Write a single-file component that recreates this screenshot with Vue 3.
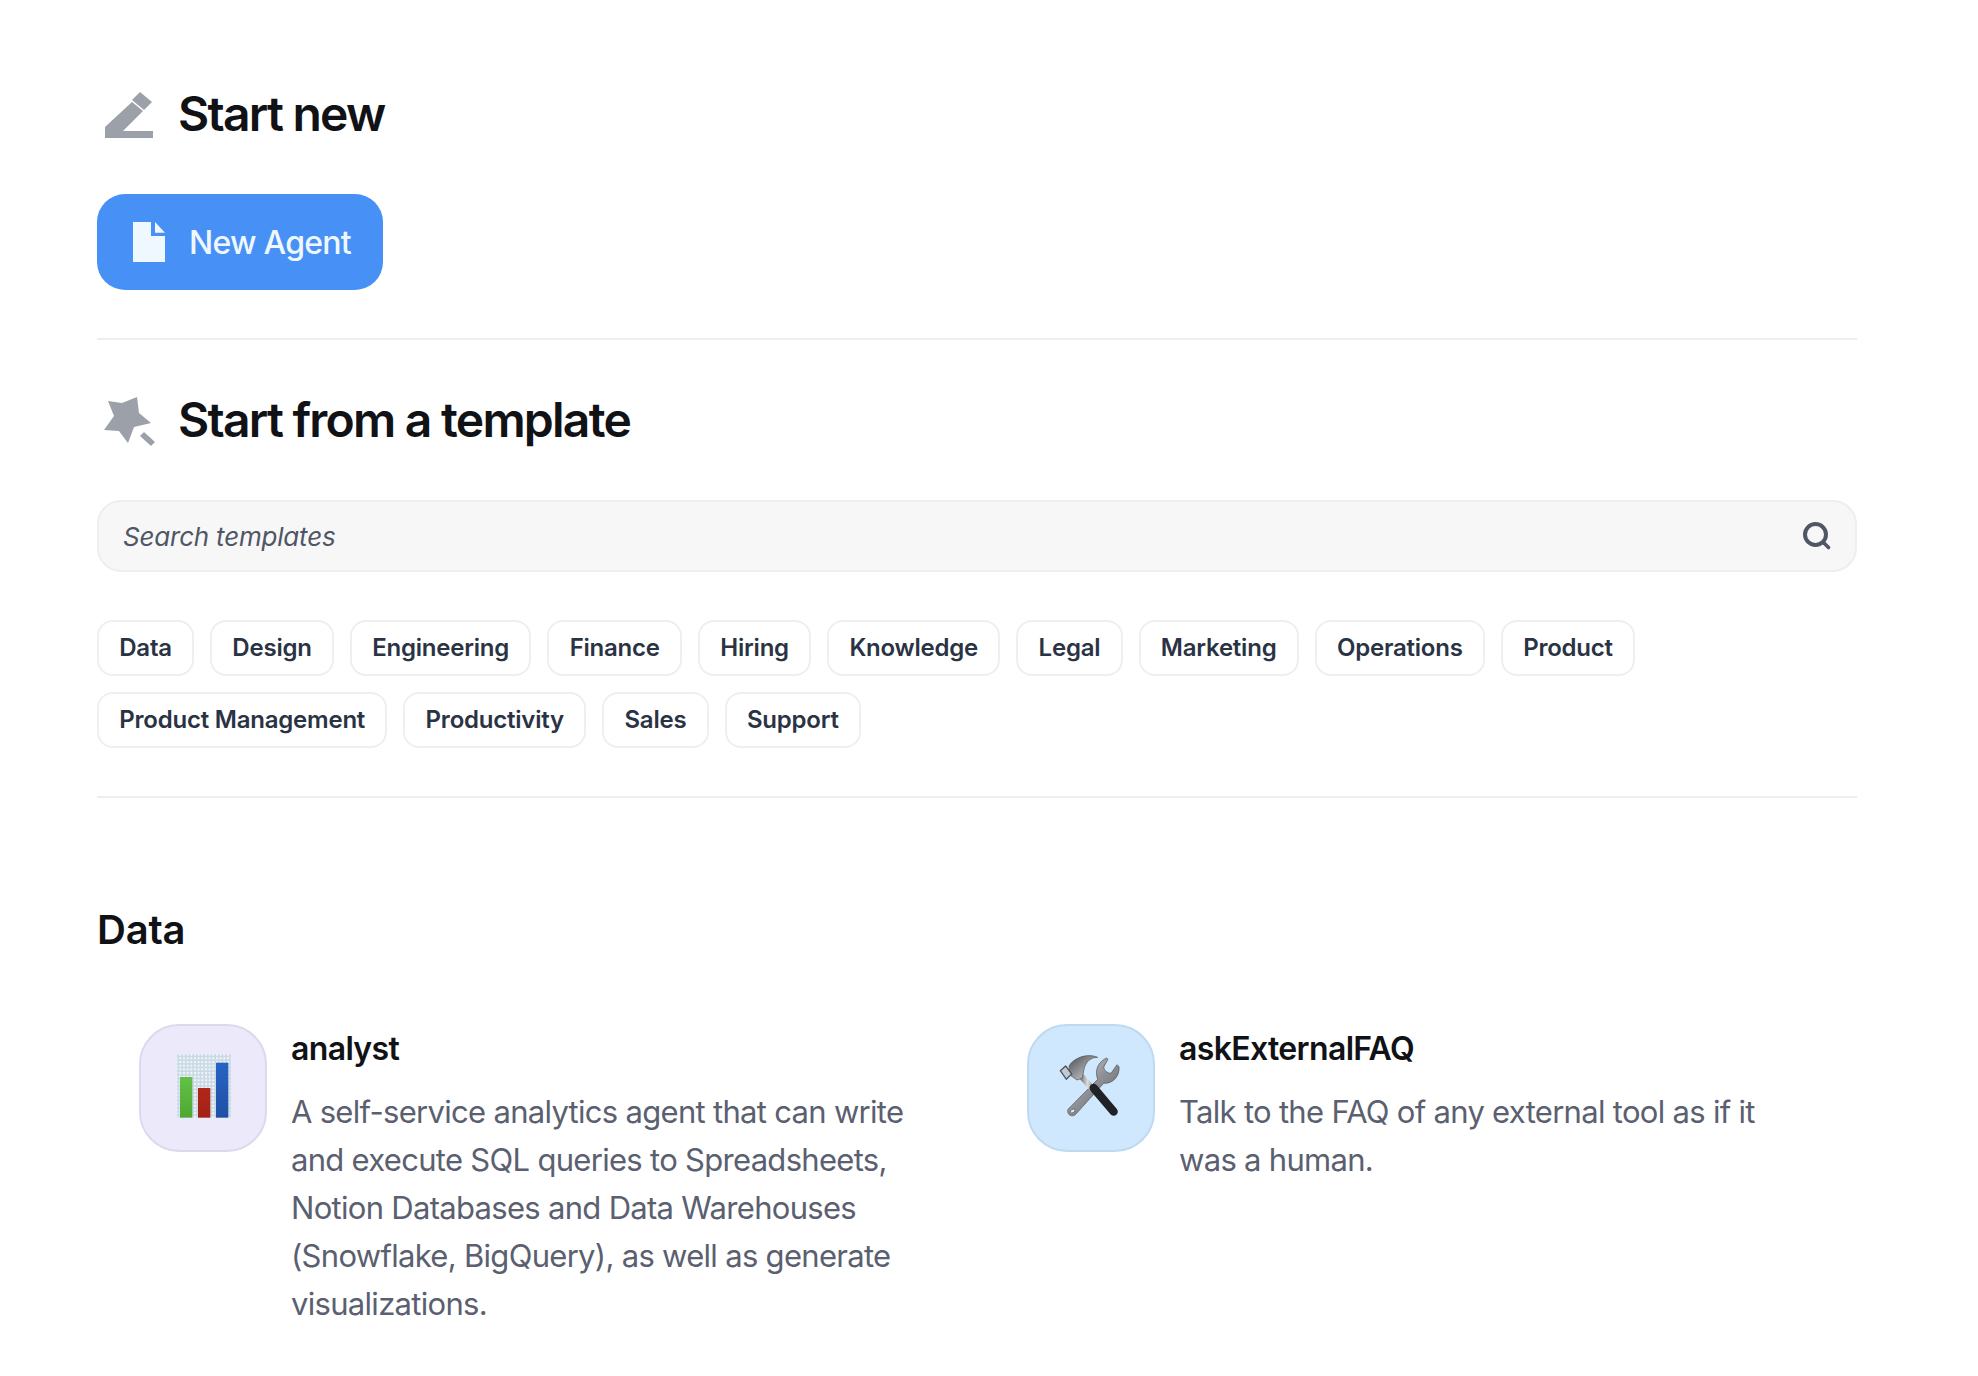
<script setup>
const chips = ['Data','Design','Engineering','Finance','Hiring','Knowledge','Legal','Marketing','Operations','Product','Product Management','Productivity','Sales','Support']
const cards = [
  { name: 'analyst', bg: 'purple', kind: 'chart', desc: 'A self-service analytics agent that can write and execute SQL queries to Spreadsheets, Notion Databases and Data Warehouses (Snowflake, BigQuery), as well as generate visualizations.' },
  { name: 'askExternalFAQ', bg: 'blue', kind: 'tools', desc: 'Talk to the FAQ of any external tool as if it was a human.' }
]
</script>

<template>
  <main class="page">
    <section class="section first">
      <div class="heading">
        <svg class="hicon" viewBox="0 0 48 48"><path fill="#9ca0a8" d="M0 48V37L27 12l11 9-20 20h30v7z"/><path fill="#9ca0a8" d="M35 2l12 10-8 8-12-10z"/></svg>
        <h2>Start new</h2>
      </div>
      <button class="cta">
        <svg class="doc" viewBox="0 0 32 40"><path fill="#eff8ff" d="M0 0h18v14h14v26H0z"/><path fill="#eff8ff" d="M22 0l10 10.7H22z"/></svg>
        <span>New Agent</span>
      </button>
    </section>

    <section class="section second">
      <div class="heading">
        <svg class="hicon" viewBox="0 0 48 48"><path fill="#9ca0a8" d="M3 5l14 2 15-6 2 16 12 10-17 4-6 16-9-12-15-1 10-14z"/><path fill="#9ca0a8" d="M35 40l4-4 11 10-4 4z"/></svg>
        <h2>Start from a template</h2>
      </div>
      <div class="search">
        <span>Search templates</span>
        <svg viewBox="0 0 28 28" class="mag"><circle cx="12.5" cy="12.5" r="10.5" fill="none" stroke="#4f5666" stroke-width="4"/><path d="M21 21l4.5 4.5" stroke="#4f5666" stroke-width="3.6" stroke-linecap="round"/></svg>
      </div>
      <div class="chips">
        <button v-for="c in chips" :key="c" class="chip">{{ c }}</button>
      </div>
    </section>

    <section class="data">
      <h3>Data</h3>
      <div class="cards">
        <article v-for="card in cards" :key="card.name" class="card">
          <div class="avatar" :class="card.bg">
            <svg v-if="card.kind === 'chart'" class="emoji chart" viewBox="0 0 192 216">
              <defs>
                <pattern id="grid" width="11" height="11" patternUnits="userSpaceOnUse">
                  <rect width="11" height="11" fill="#c9d9e6"/>
                  <rect x="0" y="0" width="6" height="6" fill="#f3f6fa"/>
                </pattern>
                <linearGradient id="g1" x1="0" y1="0" x2="0" y2="1"><stop offset="0" stop-color="#62c146"/><stop offset="1" stop-color="#4fa732"/></linearGradient>
                <linearGradient id="g2" x1="0" y1="0" x2="0" y2="1"><stop offset="0" stop-color="#b3261a"/><stop offset="1" stop-color="#a32116"/></linearGradient>
                <linearGradient id="g3" x1="0" y1="0" x2="0" y2="1"><stop offset="0" stop-color="#2864c4"/><stop offset="1" stop-color="#1f4fa5"/></linearGradient>
              </defs>
              <rect x="15" y="12" width="162" height="191" fill="url(#grid)"/>
              <rect x="24" y="81" width="37" height="122" fill="url(#g1)"/>
              <rect x="78" y="114" width="37" height="89" fill="url(#g2)"/>
              <rect x="132" y="38" width="37" height="165" fill="url(#g3)"/>
            </svg>
            <svg v-else class="emoji" viewBox="0 0 216 216">
              <defs>
                <linearGradient id="steel" x1="0" y1="0" x2="1" y2="1"><stop offset="0" stop-color="#d8d9dc"/><stop offset=".5" stop-color="#8d8f94"/><stop offset="1" stop-color="#5e6066"/></linearGradient>
                <linearGradient id="steel2" x1="0" y1="0" x2="1" y2="0"><stop offset="0" stop-color="#7a7c81"/><stop offset=".5" stop-color="#dcdde0"/><stop offset="1" stop-color="#7a7c81"/></linearGradient>
                <linearGradient id="hammer" x1="0" y1="0" x2="1" y2="1"><stop offset="0" stop-color="#4d4e53"/><stop offset=".45" stop-color="#8e8f93"/><stop offset="1" stop-color="#e4e1da"/></linearGradient>
              </defs>
              <path d="M128 88 C118 60 130 35 155 24 L159 28 L146 51 C148 63 156 69 168 70 L186 44 L192 50 C195 76 175 102 146 100 L62 193 C52 203 34 195 39 178 Z" fill="url(#steel)" stroke="#4c4e53" stroke-width="2"/>
              <ellipse cx="53" cy="183" rx="8" ry="5" transform="rotate(-30 53 183)" fill="#dbe9f6" stroke="#4c4e53" stroke-width="2"/>
              <path d="M78 78 L118 122" stroke="url(#steel2)" stroke-width="18"/>
              <path d="M116 114 L176 185" stroke="#202226" stroke-width="25" stroke-linecap="round"/>
              <path d="M42 48 C56 24 96 8 128 22 C108 22 92 34 87 58 L82 84 L66 90 L46 76Z" fill="url(#hammer)" stroke="#4c4e53" stroke-width="2"/>
              <path d="M16 62 L32 48 L50 72 L34 88Z" fill="#c4cad1" stroke="#505359" stroke-width="4"/>
            </svg>
          </div>
          <div class="body">
            <h4>{{ card.name }}</h4>
            <p>{{ card.desc }}</p>
          </div>
        </article>
      </div>
    </section>
  </main>
</template>

<style scoped>
.page {
  width: 1760px;
  margin-left: 97px;
  padding-top: 84px;
  font-family: Inter, "Liberation Sans", sans-serif;
  color: #111216;
}
.section { border-bottom: 2px solid #eceef0; }
.first { height: 254px; }
.second { padding-top: 50px; height: 406px; }
.heading { display: flex; align-items: center; gap: 25px; height: 60px; }
.hicon { width: 48px; height: 48px; margin-left: 8px; overflow: visible; flex: none; }
h2 { margin: 0; font-size: 48px; line-height: 60px; font-weight: 600; letter-spacing: -1.75px; }
.cta {
  display: flex; align-items: center; gap: 24px;
  margin-top: 50px; height: 96px; width: 286px; padding: 0 0 0 36px;
  background: #4790f6; border: 0; border-radius: 28px;
  color: #eff8ff; font: 500 32px Inter, sans-serif; letter-spacing: -0.75px;
}
.doc { width: 32px; height: 40px; flex: none; }
.search {
  display: flex; align-items: center; justify-content: space-between;
  box-sizing: border-box; height: 72px; margin-top: 50px; padding: 0 24px 0 24px;
  background: #f7f7f8; border: 2px solid #eeeef0; border-radius: 24px;
  color: #4f5666; font-size: 26px; font-style: italic; letter-spacing: -0.2px;
}
.mag { width: 28px; height: 28px; overflow: visible; }
.chips { display: flex; flex-wrap: wrap; gap: 16px; margin-top: 48px; }
.chip {
  height: 56px; padding: 0 20.25px 1px; background: #fff;
  border: 2px solid #eeeff0; border-radius: 16px;
  color: #2a3344; font: 600 24px Inter, sans-serif; letter-spacing: -0.22px;
}
.data { padding-top: 108px; }
h3 { margin: 0; font-size: 40px; line-height: 48px; font-weight: 600; letter-spacing: -0.2px; }
.cards { display: grid; grid-template-columns: 888px 1fr; margin-top: 70px; padding-left: 42px; }
.card { display: flex; gap: 24px; }
.avatar {
  box-sizing: border-box; width: 128px; height: 128px; flex: none; border-radius: 40px;
  display: flex; align-items: center; justify-content: center; border: 2px solid;
}
.purple { background: #ece9fb; border-color: #dcd9ec; }
.blue { background: #cfe8fd; border-color: #bfd9ee; }
.emoji { width: 72px; height: 72px; margin-top: -4px; flex: none; }
.chart { width: 64px; margin-left: 2px; }
.body { width: 632px; margin-top: 1px; }
h4 { margin: 0 0 15px; font-size: 32px; line-height: 48px; font-weight: 600; letter-spacing: -0.65px; }
p { margin: 0; font-size: 31px; line-height: 48px; color: #5a6070; letter-spacing: -0.7px; }
</style>
